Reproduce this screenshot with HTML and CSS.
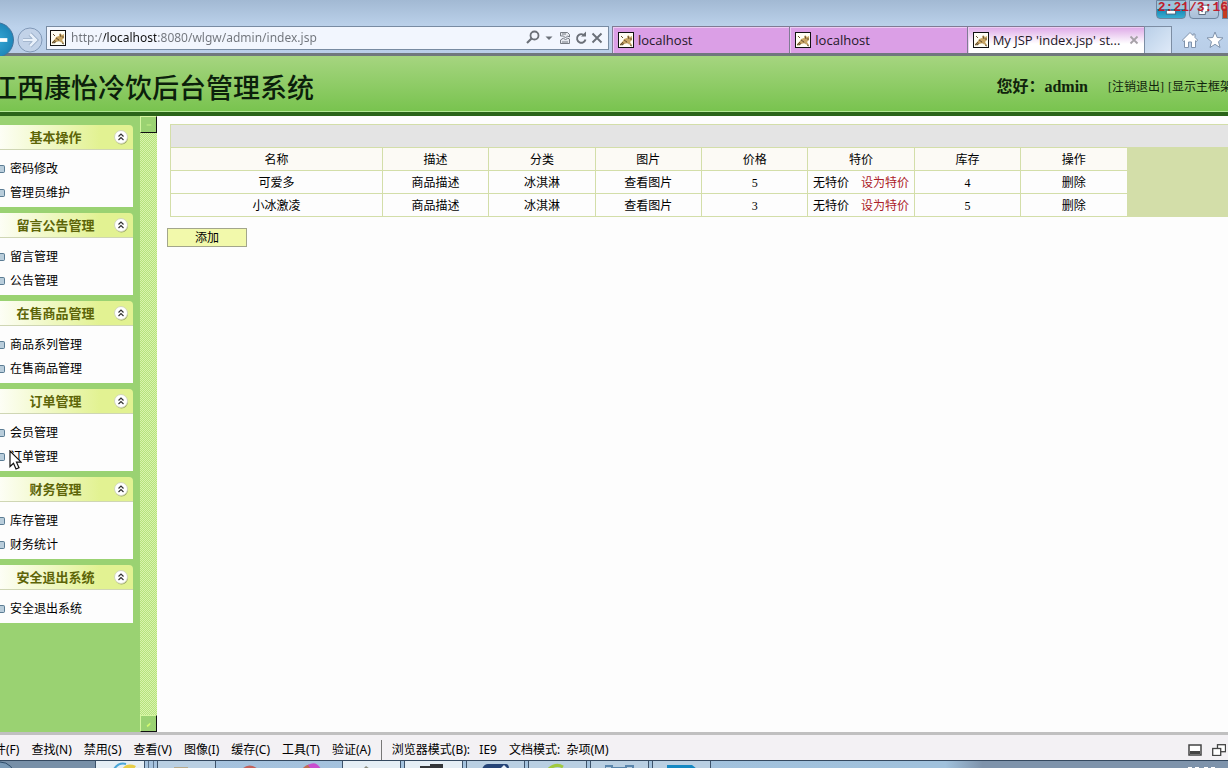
FILE: index.html
```html
<!DOCTYPE html>
<html lang="zh-CN">
<head>
<meta charset="utf-8">
<title>My JSP 'index.jsp' starting page</title>
<link rel="stylesheet" href="styles.css">
</head>
<body>
<svg class="defs" aria-hidden="true">
  <symbol id="cat" viewBox="0 0 16 16">
    <rect x=".5" y=".5" width="15" height="15" fill="#fffef4" stroke="#111"/>
    <path d="M2 12l3-3 1-2 3-1 1-3 2 2 2-1v4l-2 2 2 3h-2l-2-2-4 1z" fill="#c8a564"/>
    <path d="M3 4l2 2M2 13l3-3M10 4l1 3M12 7h2M6 8l3 2M12 13l2 1" stroke="#695333" fill="none"/>
    <path d="M2 13h3l1-2zM8 10l3 2" fill="#444" stroke="#8b6a31" stroke-width=".5"/>
  </symbol>
  <symbol id="fold" viewBox="0 0 16 16">
    <circle cx="8.500" cy="9" r="6.500" fill="#98a464"/>
    <circle cx="8" cy="8" r="6.500" fill="#fff" stroke="#d4d8b8"/>
    <path d="M5.500 7.500L8 5l2.500 2.500M5.500 11L8 8.500l2.500 2.500" fill="none" stroke="#333" stroke-width="1.200"/>
  </symbol>
</svg>

<header class="chrome">
  <div class="caption">
    <button class="win win-min" aria-label="最小化"><svg viewBox="0 0 30 19"><rect x="10" y="10" width="10" height="4" fill="#fff" stroke="#47637c"/></svg></button>
    <button class="win" aria-label="还原"><svg viewBox="0 0 30 19"><path d="M12.500 4.500h7v7h-3v3h-7v-7h3zM12.500 10.500h1v1h-1z" fill="#fff" stroke="#536377"/></svg></button>
    <button class="win win-close" aria-label="关闭"></button>
    <span class="clock">2:21/3:16</span>
  </div>
  <div class="navrow">
    <div class="history">
      <button class="back" aria-label="后退"><svg viewBox="0 0 36 36"><path d="M12 18h18" stroke="#fff" stroke-width="4"/><path d="M17 11l-7 7 7 7" fill="none" stroke="#fff" stroke-width="4"/></svg></button>
      <button class="forward" aria-label="前进"><svg viewBox="0 0 26 26"><circle cx="13" cy="13" r="12" fill="#c2d2e8" stroke="#8199b8"/><path d="M6 13h13M13 7l6 6-6 6" fill="none" stroke="#8fa5c1" stroke-width="4"/><path d="M6 13h12M13 7l6 6-6 6" fill="none" stroke="#e8f0fa" stroke-width="2.500"/></svg></button>
    </div>
    <div class="address">
      <svg class="ico"><use href="#cat"/></svg>
      <input class="url" type="text" aria-label="地址" value="http://localhost:8080/wlgw/admin/index.jsp">
      <button aria-label="搜索"><svg class="ico" viewBox="0 0 16 16"><circle cx="9.500" cy="5.500" r="4" fill="none" stroke="#6b7078" stroke-width="1.800"/><path d="M6.500 8.500L2 13" stroke="#6b7078" stroke-width="2.200"/></svg></button>
      <button aria-label="下拉"><svg class="ico" viewBox="0 0 16 16"><path d="M4.500 6.500h7L8 10z" fill="#6b7078"/></svg></button>
      <button aria-label="兼容性视图"><svg class="ico" viewBox="0 0 16 16"><path d="M3.500 6V2.500h7l2 2V7l-2-1-2 2-2-2zM3.500 13.500h9V9l-2-1-2 2-2-2-3 2z" fill="#e6e9ef" stroke="#777c84"/><path d="M5 4h4M5 12h6" stroke="#777c84"/></svg></button>
      <button aria-label="刷新"><svg class="ico" viewBox="0 0 16 16"><path d="M11.500 5.500a4.300 4.300 0 1 0 1 4" fill="none" stroke="#6b7078" stroke-width="1.900"/><path d="M8 6.500h5v-5z" fill="#6b7078"/></svg></button>
      <button aria-label="停止"><svg class="ico" viewBox="0 0 16 16"><path d="M3.500 3.500l9 9M12.500 3.500l-9 9" stroke="#6b7078" stroke-width="1.900"/></svg></button>
    </div>
    <nav class="tabs">
      <button class="tab"><svg class="ico"><use href="#cat"/></svg><span>localhost</span></button>
      <button class="tab"><svg class="ico"><use href="#cat"/></svg><span>localhost</span></button>
      <button class="tab tab-on"><svg class="ico"><use href="#cat"/></svg><span>My JSP 'index.jsp' st...</span><svg class="tab-x" viewBox="0 0 10 10"><path d="M1.500 1.500l7 7M8.500 1.500l-7 7" stroke="#a6a1a7" stroke-width="1.800"/></svg></button>
      <button class="tab-new" aria-label="新建选项卡"></button>
    </nav>
    <div class="tools">
      <button aria-label="主页"><svg viewBox="0 0 18 18"><path d="M9 1.500L1.500 9l1 1.500 1-.8V16.500h4V11h3v5.500h4V9.700l1 .8 1-1.500-2.500-2.500V3h-2v1.500z" fill="#fff" stroke="#8093ac"/></svg></button>
      <button aria-label="收藏夹"><svg viewBox="0 0 18 18"><path d="M9 1l2.200 5.500 5.800.4-4.500 3.800L14 16.500l-5-3.200-5 3.200 1.500-5.800L1 6.900l5.800-.4z" fill="#fff" stroke="#8093ac"/></svg></button>
    </div>
  </div>
</header>

<div class="banner">
  <h1>江西康怡冷饮后台管理系统</h1>
  <div class="user">
    <b>您好：<span>admin</span></b>
    <a href="#">[注销退出]</a><a href="#">[显示主框架]</a>
  </div>
</div>

<div class="frames">
  <aside class="side">
    <section><h2>基本操作<svg><use href="#fold"/></svg></h2><ul><li><a href="#">密码修改</a></li><li><a href="#">管理员维护</a></li></ul></section>
    <section><h2>留言公告管理<svg><use href="#fold"/></svg></h2><ul><li><a href="#">留言管理</a></li><li><a href="#">公告管理</a></li></ul></section>
    <section><h2>在售商品管理<svg><use href="#fold"/></svg></h2><ul><li><a href="#">商品系列管理</a></li><li><a href="#">在售商品管理</a></li></ul></section>
    <section><h2>订单管理<svg><use href="#fold"/></svg></h2><ul><li><a href="#">会员管理</a></li><li class="hovered"><a href="#">订单管理</a><svg class="cursor" viewBox="0 0 13 20"><path d="M1 1v15.500l3.500-3.300L7 19l3-1.300-2.500-5.500h4.700z" fill="#fff" stroke="#111" stroke-width="1.200"/></svg></li></ul></section>
    <section><h2>财务管理<svg><use href="#fold"/></svg></h2><ul><li><a href="#">库存管理</a></li><li><a href="#">财务统计</a></li></ul></section>
    <section><h2>安全退出系统<svg><use href="#fold"/></svg></h2><ul><li><a href="#">安全退出系统</a></li></ul></section>
  </aside>
  <div class="scroll">
    <button aria-label="向上滚动"><svg viewBox="0 0 16 16"><path d="M6 8.500h5" stroke="#c8f08a"/></svg></button>
    <button aria-label="向下滚动"><svg viewBox="0 0 16 16"><path d="M6 10l4-3v2l-3 3z" fill="#d2fa70"/></svg></button>
  </div>
  <main class="main">
    <table>
      <colgroup><col class="wide"><col span="8"></colgroup>
      <tbody>
      <tr class="bar"><td colspan="9"></td></tr>
      <tr class="head"><th>名称</th><th>描述</th><th>分类</th><th>图片</th><th>价格</th><th>特价</th><th>库存</th><th>操作</th></tr>
      <tr><td>可爱多</td><td>商品描述</td><td>冰淇淋</td><td><a href="#">查看图片</a></td><td>5</td><td><span class="deal">无特价<a class="red" href="#">设为特价</a></span></td><td>4</td><td><a href="#">删除</a></td></tr>
      <tr><td>小冰激凌</td><td>商品描述</td><td>冰淇淋</td><td><a href="#">查看图片</a></td><td>3</td><td><span class="deal">无特价<a class="red" href="#">设为特价</a></span></td><td>5</td><td><a href="#">删除</a></td></tr>
      </tbody>
    </table>
    <button class="add">添加</button>
  </main>
</div>

<div class="devbar">
  <div class="menus">
    <button>文件(F)</button><button>查找(N)</button><button>禁用(S)</button><button>查看(V)</button><button>图像(I)</button><button>缓存(C)</button><button>工具(T)</button><button>验证(A)</button>
  </div>
  <div class="modes">
    <button>浏览器模式(B):&nbsp;&nbsp; IE9</button><button>文档模式:&nbsp; 杂项(M)</button>
  </div>
  <div class="panes">
    <button aria-label="最小化面板"><svg viewBox="0 0 14 12"><rect x="1" y="1" width="12" height="10" fill="#fff" stroke="#444" stroke-width="1.500"/><path d="M2 8.500h10" stroke="#444" stroke-width="3"/></svg></button>
    <button aria-label="分离面板"><svg viewBox="0 0 14 12"><rect x="5.500" y=".7" width="8" height="7" fill="#fff" stroke="#444" stroke-width="1.300"/><rect x=".7" y="4.500" width="8" height="7" fill="#fff" stroke="#444" stroke-width="1.300"/></svg></button>
  </div>
</div>

<footer class="taskbar">
  <div class="start"><svg viewBox="0 0 30 8"><circle cx="0" cy="16" r="15" fill="#7999b5" stroke="#2d4b68"/></svg></div>
  <div class="task lit"><svg viewBox="0 0 30 8"><path d="M2 8q5-7 12-5" stroke="#4aa6d8" stroke-width="2" fill="none"/><path d="M10 8Q15 1 24 5l-2 3z" fill="#e7cd47"/></svg></div>
  <div class="stack"></div>
  <div class="task"><svg viewBox="0 0 30 8"><path d="M2 8V6h14v2z" fill="#b6a98b"/></svg></div>
  <div class="pins"><svg viewBox="0 0 30 8"><path d="M9 8q7-7 16 0z" fill="#c4615a"/></svg><svg viewBox="0 0 30 8"><path d="M5 8q5-6 9-4v4z" fill="#c36b52"/><path d="M11 4q8-5 13 4H14z" fill="#c94ccf"/></svg></div>
  <div class="task lit"><svg viewBox="0 0 30 8"><path d="M6 8l3-3 4 3z" fill="#8a8b80"/></svg></div>
  <div class="task lit"><svg viewBox="0 0 30 8"><path d="M1 8V5h10V3h13v5z" fill="#343639"/></svg></div>
  <div class="task"><svg viewBox="0 0 30 8"><path d="M1 8q2-5 6-5h18q3 0 3 5z" fill="#254477"/><path d="M20 7l3-3 3 3" fill="#e6eef7"/></svg></div>
  <div class="task"><svg viewBox="0 0 30 8"><path d="M6 8q7-6 14-2" stroke="#a1ca3f" stroke-width="3" fill="none"/></svg></div>
  <div class="task"><svg viewBox="0 0 30 8"><path d="M0 8V5h7v2h14V5h7v3" fill="none" stroke="#5a86ac" stroke-width="2"/></svg></div>
  <div class="task"><svg viewBox="0 0 30 8"><path d="M0 8V4h25l5 4z" fill="#1488c2"/></svg></div>
  <div class="tray"><svg viewBox="0 0 30 8"><path d="M0 7h4M7 7h4M16 7h4M23 7h4" stroke="#fff" stroke-width="2"/></svg></div>
</footer>
</body>
</html>
```
FILE: styles.css
```css
* { box-sizing: border-box; }
body {
  margin: 0;
  height: 100vh;
  display: flex;
  flex-direction: column;
  overflow: hidden;
  background: #fdfdfd;
  color: #000;
  font: 12px/24px "Liberation Serif", "Noto Sans CJK SC", sans-serif;
}
button { border: 0; padding: 0; background: none; font: inherit; color: inherit; }
button svg { display: block; }
a { color: inherit; text-decoration: none; }
.defs { position: absolute; width: 0; height: 0; }
.ico { width: 16px; height: 16px; flex: none; }

/* browser window */
.chrome {
  flex: none;
  background: linear-gradient(#a2b9d3, #bdd3ec 28px, #b9cee8);
  border-bottom: 3px solid #70787d;
  font: 13px/20px "Open Sans", sans-serif;
}
.caption { height: 26px; display: flex; justify-content: flex-end; gap: 3px; position: relative; overflow: hidden; }
.win { width: 30px; height: 19px; border: 1px solid #6f849e; border-radius: 0 0 4px 4px; background: linear-gradient(#c8d6e6, #a9bfd8); }
.win-min { background: linear-gradient(#9cc3dc 50%, #1687b5 50%, #39add0); }
.win-close { width: 6px; border-radius: 0; background: linear-gradient(#e29a87 40%, #c53d20 50%); }
.clock { position: absolute; right: 0; top: -2px; font: bold 13px/20px "Liberation Mono", monospace; color: #c0202c; }
.navrow { display: flex; height: 27px; }
.history { width: 46px; flex: none; display: flex; align-items: center; gap: 3px; }
.back { flex: none; width: 36px; height: 36px; margin-left: -22px; border-radius: 50%; background: radial-gradient(#38a9d6, #1479ae); border: 1px solid #40729b; }
.forward { flex: none; width: 26px; height: 26px; }
.address {
  flex: 555 1 0;
  min-width: 0;
  display: flex;
  align-items: center;
  height: 24px;
  margin-right: 3px;
  padding: 0 3px;
  background: #f2f6fe;
  border: 1px solid #788ba2;
}
.url {
  flex: 1;
  min-width: 0;
  margin: 0 0 0 5px;
  padding: 0;
  border: 0;
  font: 12px/20px "Noto Sans", sans-serif;
  background: linear-gradient(90deg, #70747b 33px, #111 33px 85px, #70747b 85px);
  -webkit-background-clip: text;
  background-clip: text;
  -webkit-text-fill-color: transparent;
}
.tabs { flex: 560 1 0; min-width: 0; display: flex; }
.tab {
  flex: 1;
  min-width: 0;
  display: flex;
  align-items: center;
  gap: 4px;
  padding: 0 5px;
  background: #db9fe6;
  border: 1px solid #7f7b94;
  border-width: 1px 0 0 1px;
  box-shadow: inset 1px 1px #eccbf2;
  color: #241828;
  white-space: nowrap;
}
.tab-on { background: linear-gradient(#dda8e7, #fff 65%); }
.tab-x { width: 10px; height: 10px; flex: none; margin-left: auto; }
.tab-new { width: 28px; flex: none; border: 1px solid #7c8da3; border-bottom: 0; background: linear-gradient(135deg, #b9cfe8, #dfeaf8); }
.tools { flex: none; width: 56px; display: flex; align-items: center; gap: 7px; padding-left: 9px; }
.tools svg { width: 18px; height: 18px; }

/* page banner */
.banner {
  flex: none;
  height: 60px;
  display: flex;
  align-items: center;
  justify-content: space-between;
  padding-top: 5px;
  margin-right: -8px;
  background: linear-gradient(#a6d580, #78c34e);
  border-bottom: 4px solid #2a6419;
  box-shadow: inset 0 -1px #b3e795;
}
h1 { margin: 0 0 0 -10px; font: 500 27px/36px "Noto Sans CJK SC", sans-serif; color: #0b200b; white-space: nowrap; }
.user { display: flex; align-items: center; gap: 4px; white-space: nowrap; color: #10240c; }
.user b { font-size: 16px; margin-right: 16px; }

/* sidebar */
.frames { flex: 1; min-height: 0; display: flex; }
.side { flex: none; width: 140px; overflow: hidden; background: #9ad272; padding: 9px 7px 0 0; display: flex; flex-direction: column; gap: 6px; }
.side h2 {
  margin: 0;
  height: 25px;
  padding-right: 22px;
  position: relative;
  text-align: center;
  font: bold 13px/23px "Noto Sans CJK SC", sans-serif;
  color: #5d6508;
  background: linear-gradient(90deg, #fdfef5, #e2f292 75%);
  border-bottom: 1px solid #cfd6b4;
  border-radius: 0 4px 0 0;
}
.side h2 svg { position: absolute; right: 4px; top: 4px; width: 16px; height: 16px; }
.side ul { margin: 0; padding: 7px 0 2px; list-style: none; background: #fdfdfd; }
.side li { display: flex; align-items: center; gap: 5px; position: relative; }
.side li::before { content: ""; width: 4px; height: 6px; border: 1px solid #5b7c94; border-left: 0; border-radius: 0 2px 2px 0; background: #b9cddb; }
.cursor { position: absolute; left: 9px; top: 5px; width: 13px; height: 20px; }
.scroll {
  flex: none;
  width: 17px;
  display: flex;
  flex-direction: column;
  justify-content: space-between;
  background: repeating-conic-gradient(#b5e37c 0 25%, #d9f3ae 0 50%) 0 0 / 2px 2px;
}
.scroll button { width: 17px; height: 17px; background: #9ad272; border: 1px solid #111; border-top-color: #d5f7a0; border-left-color: #d5f7a0; }

/* goods table */
.main { flex: 1; min-width: 0; overflow: hidden; padding: 8px 0 0 10px; }
table { width: calc(100% + 3px); margin-left: 3px; table-layout: fixed; border-spacing: 1px; background: #d3dea9; text-align: center; line-height: 20px; }
col { width: 10%; }
.wide { width: 20%; }
th, td { height: 22px; padding: 2px 0 0; font-weight: normal; background: #fdfdfd; white-space: nowrap; }
.head th { background: #fcfaf5; }
.bar td { background: #e4e4e4; }
.deal { display: inline-flex; gap: 12px; }
.red { color: #ab2026; }
.add { display: block; width: 80px; height: 19px; margin-top: 11px; padding-top: 2px; background: #f2f9ab; border: 1px solid #a3a68b; line-height: 15px; }

/* developer tools strip */
.devbar {
  flex: none;
  height: 28px;
  display: flex;
  align-items: center;
  padding: 4px 2px 0 0;
  background: #f3f1f4;
  border-top: 3px solid #c0c0c0;
  font: 12px/20px "Noto Sans", "Noto Sans CJK SC", sans-serif;
  white-space: nowrap;
}
.menus, .modes { display: flex; gap: 12px; }
.menus { margin-left: -18px; padding-right: 10px; border-right: 1px solid #777; }
.modes { padding-left: 10px; }
.panes { margin-left: auto; display: flex; gap: 10px; }
.panes svg { width: 14px; height: 12px; }

/* taskbar */
.taskbar { flex: none; height: 8px; display: flex; gap: 3px; overflow: hidden; background: linear-gradient(90deg, #a6c2de, #a0c1dc 77%, #7e93ab 80%); border-top: 1px solid #34485f; }
.taskbar svg { display: block; width: 30px; height: 8px; }
.start { width: 95px; flex: none; margin-right: -3px; background: #778fa7; }
.task { width: 59px; flex: none; padding-left: 14px; border: 1px solid #3c526a; border-width: 0 1px; background: #b9cfe2; }
.lit { background: #e5eef5; }
.start + .task { width: 50px; padding-left: 16px; }
.stack { width: 6px; border: 1px solid #5b738d; border-width: 0 1px; }
.pins { width: 120px; flex: none; display: flex; gap: 34px; padding-left: 14px; }
.tray { margin-left: auto; padding-right: 10px; }
```
